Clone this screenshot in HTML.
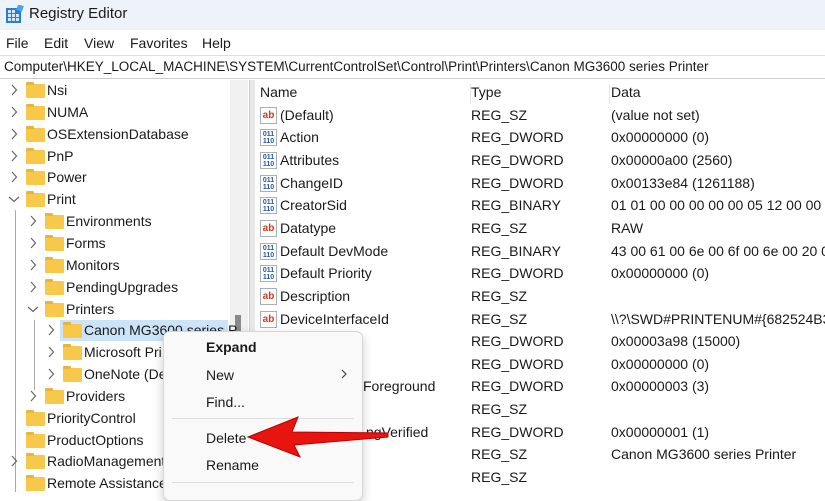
<!DOCTYPE html>
<html><head><meta charset="utf-8"><style>
*{margin:0;padding:0;box-sizing:border-box}
body{width:825px;height:492px;overflow:hidden;background:#fff;font-family:"Liberation Sans",sans-serif;font-size:13.5px;color:#1a1a1a;position:relative}
.a{position:absolute;white-space:nowrap}
.fold{position:absolute;width:19px;height:14px;background:#f7c84a;border-radius:1px}
.fold:before{content:"";position:absolute;left:0;top:-2px;width:8px;height:3px;background:#e8b53a;border-radius:1px 1px 0 0}
.ic{position:absolute;width:17px;height:17px;border:1px solid #a8b0b8;background:#fff;font-size:10px;font-weight:bold;line-height:15px;text-align:center}
.ab{color:#d23a1a}
.bin{color:#2255aa;font-size:7px;line-height:7px;padding-top:1px}
</style></head><body>
<div class="a" style="left:0;top:0;width:825px;height:30px;background:#eef2f9"></div>
<svg class="a" style="left:6px;top:5px" width="18" height="18"><rect x="0" y="3" width="15" height="15" fill="#2a7fd4"/><g fill="#cfe6fb"><rect x="2" y="5" width="3" height="3"/><rect x="6" y="5" width="3" height="3"/><rect x="2" y="9" width="3" height="3"/><rect x="6" y="9" width="3" height="3"/><rect x="10" y="9" width="3" height="3"/><rect x="2" y="13" width="3" height="3"/><rect x="6" y="13" width="3" height="3"/><rect x="10" y="13" width="3" height="3"/></g><rect x="11" y="0" width="6" height="6" fill="#4aa3ee" transform="rotate(20 14 3)"/></svg>
<div class="a" style="left:29px;top:5px;font-size:15px">Registry Editor</div>
<div class="a" style="left:6px;top:35px;font-size:14px">File</div>
<div class="a" style="left:44px;top:35px;font-size:14px">Edit</div>
<div class="a" style="left:84px;top:35px;font-size:14px">View</div>
<div class="a" style="left:130px;top:35px;font-size:14px">Favorites</div>
<div class="a" style="left:202px;top:35px;font-size:14px">Help</div>
<div class="a" style="left:0;top:55px;width:825px;height:24px;background:#fff;border-top:1px solid #ddd;border-bottom:1px solid #ccc"></div>
<div class="a" style="left:4px;top:59px;font-size:13.5px">Computer\HKEY_LOCAL_MACHINE\SYSTEM\CurrentControlSet\Control\Print\Printers\Canon MG3600 series Printer</div>
<div class="a" style="left:230px;top:80px;width:18px;height:412px;background:#f0f0f0"></div>
<div class="a" style="left:235px;top:315px;width:6px;height:30px;background:#8a8a8a"></div>
<div class="a" style="left:249px;top:80px;width:6px;height:412px;background:#e8e8e8;border-left:1px solid #ccc"></div>
<div class="a" style="left:60px;top:320px;width:168px;height:21px;background:#cce4f7"></div>
<div class="a" style="left:15px;top:210px;width:1px;height:282px;background:#aaa"></div>
<div class="a" style="left:34px;top:320px;width:1px;height:70px;background:#aaa"></div>

<div id="tree"></div>
<div class="a" style="left:255px;top:80px;width:570px;height:412px">
<div class="a" style="left:215px;top:4px;width:1px;height:20px;background:#e5e5e5"></div>
<div class="a" style="left:354px;top:4px;width:1px;height:20px;background:#e5e5e5"></div>
</div>
<div id="right"></div>

<div class="a" style="left:163px;top:331px;width:200px;height:170px;background:#f9f9f9;border:1px solid #d6d6d6;border-radius:7px;box-shadow:0 4px 10px rgba(0,0,0,.2)"></div>
<div class="a" style="left:206px;top:339px;font-size:14px;font-weight:bold">Expand</div>
<div class="a" style="left:206px;top:367px;font-size:14px">New</div>
<svg class="a" style="left:340px;top:369px" width="8" height="10"><polyline points="2,1 6,5 2,9" fill="none" stroke="#444" stroke-width="1.2"/></svg>
<div class="a" style="left:206px;top:394px;font-size:14px">Find...</div>
<div class="a" style="left:172px;top:418px;width:182px;height:1px;background:#ddd"></div>
<div class="a" style="left:206px;top:430px;font-size:14px">Delete</div>
<div class="a" style="left:206px;top:457px;font-size:14px">Rename</div>
<div class="a" style="left:172px;top:482px;width:182px;height:1px;background:#ddd"></div>
<svg class="a" style="left:240px;top:412px" width="160" height="50"><path d="M8 25 L58 5 L52 20 L148 21 L148 25 L54 33 L60 45 Z" fill="#e8140f" stroke="#b00" stroke-width="1"/></svg>

<script>
var t=[[10,28,"Nsi",1],[10,28,"NUMA",1],[10,28,"OSExtensionDatabase",1],[10,28,"PnP",1],[10,28,"Power",1],[10,28,"Print",2],[29,47,"Environments",1],[29,47,"Forms",1],[29,47,"Monitors",1],[29,47,"PendingUpgrades",1],[29,47,"Printers",2],[47,65,"Canon MG3600 series P",1],[47,65,"Microsoft Pri",1],[47,65,"OneNote (De",1],[29,47,"Providers",1],[10,28,"PriorityControl",0],[10,28,"ProductOptions",0],[10,28,"RadioManagement",1],[10,28,"Remote Assistance",0]];
var h="";t.forEach(function(r,i){var y=90+i*21.85;
if(r[3]==1)h+='<svg class="a" style="left:'+r[0]+'px;top:'+(y-6)+'px" width="8" height="12"><polyline points="2,1 6.5,6 2,11" fill="none" stroke="#666" stroke-width="1.2"/></svg>';
if(r[3]==2)h+='<svg class="a" style="left:'+(r[0]-2)+'px;top:'+(y-4)+'px" width="12" height="8"><polyline points="1,2 6,6.5 11,2" fill="none" stroke="#666" stroke-width="1.2"/></svg>';
h+='<div class="fold" style="left:'+(r[1]-2)+'px;top:'+(y-6)+'px"></div><div class="a" style="left:'+(r[1]+19)+'px;top:'+(y-8)+'px;font-size:14px">'+r[2]+'</div>';});
document.getElementById("tree").innerHTML=h;
var R=[["Name","Type","Data",-1],["(Default)","REG_SZ","(value not set)",0],["Action","REG_DWORD","0x00000000 (0)",1],["Attributes","REG_DWORD","0x00000a00 (2560)",1],["ChangeID","REG_DWORD","0x00133e84 (1261188)",1],["CreatorSid","REG_BINARY","01 01 00 00 00 00 00 05 12 00 00",1],["Datatype","REG_SZ","RAW",0],["Default DevMode","REG_BINARY","43 00 61 00 6e 00 6f 00 6e 00 20 00",1],["Default Priority","REG_DWORD","0x00000000 (0)",1],["Description","REG_SZ","",0],["DeviceInterfaceId","REG_SZ","\\\\?\\SWD#PRINTENUM#{682524B3",0],["","REG_DWORD","0x00003a98 (15000)",-2],["","REG_DWORD","0x00000000 (0)",-2],["Foreground","REG_DWORD","0x00000003 (3)",-3],["","REG_SZ","",-2],["ngVerified","REG_DWORD","0x00000001 (1)",-3],["","REG_SZ","Canon MG3600 series Printer",-2],["","REG_SZ","",-2]];
h="";R.forEach(function(r,i){var y=92+i*22.65;
if(r[3]>=0)h+='<div class="ic '+(r[3]?'bin':'ab')+'" style="left:260px;top:'+(y-8)+'px">'+(r[3]?'011<br>110':'ab')+'</div>';
var nx=r[3]==-1?260:(r[3]==-3?(r[0]=="Foreground"?363:366):280);
h+='<div class="a" style="left:'+nx+'px;top:'+(y-8)+'px;font-size:14px">'+r[0]+'</div>';
h+='<div class="a" style="left:471px;top:'+(y-8)+'px;font-size:14px">'+r[1]+'</div>';
h+='<div class="a" style="left:611px;top:'+(y-8)+'px;font-size:14px">'+r[2]+'</div>';});
document.getElementById("right").innerHTML=h;
</script>
</body></html>
